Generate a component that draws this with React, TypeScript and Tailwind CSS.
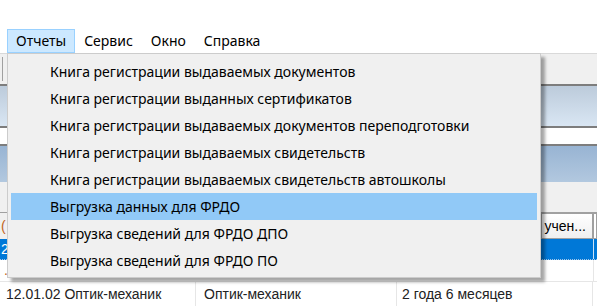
import { useState } from 'react'

const MENU_TOP = ['Отчеты', 'Сервис', 'Окно', 'Справка']

const REPORT_ITEMS = [
    'Книга регистрации выдаваемых документов',
    'Книга регистрации выданных сертификатов',
    'Книга регистрации выдаваемых документов переподготовки',
    'Книга регистрации выдаваемых свидетельств',
    'Книга регистрации выдаваемых свидетельств автошколы',
    'Выгрузка данных для ФРДО',
    'Выгрузка сведений для ФРДО ДПО',
    'Выгрузка сведений для ФРДО ПО',
]

export default function App() {
    const [hover, setHover] = useState(5)

    return (
        <div className="relative w-[597px] h-[306px] overflow-hidden bg-white font-['Noto_Sans',sans-serif] text-[14px] text-black">
            {/* Шапка и строка меню */}
            <div className="h-[29px] bg-white" />
            <div className="flex h-[24px] pl-[7px] bg-white">
                {MENU_TOP.map((item, i) => (
                    <div
                        key={item}
                        className={`flex items-center px-[8px] leading-none border ${
                            i === 0 ? 'bg-[#cce8ff] border-[#99d1ff]' : 'border-transparent'
                        }`}
                    >
                        {item}
                    </div>
                ))}
            </div>

            {/* Панель инструментов */}
            <div className="h-[31px] bg-[#f0f0f0] border-t border-[#d9d9d9] flex items-center pl-[2px]">
                <div className="w-[1px] h-[24px] bg-[#a0a0a0]" />
            </div>
            <div className="h-[2px] bg-[#7d7d7d]" />
            <div className="h-[40px] bg-gradient-to-b from-[#bccbdb] to-[#d9e6f3]" />
            <div className="h-[2px] bg-[#7d7d7d]" />
            <div className="h-[16px] bg-white" />
            <div className="h-[2px] bg-[#7d7d7d]" />
            <div className="h-[36px] bg-gradient-to-b from-[#98b4d3] to-[#b2c8df]" />
            <div className="h-[31px] bg-[#f0f0f0] border-b border-[#a0a0a0]" />

            {/* Таблица */}
            <div className="flex h-[26px] font-['Liberation_Sans',sans-serif] text-[14px] bg-[#f0f0f0]">
                <div className="w-[541px] flex items-center pl-[1px] text-[#c0641a] border-r border-[#a0a0a0]">(</div>
                <div className="w-[52px] flex items-center justify-end pr-[6px] bg-gradient-to-b from-[#ffffff] to-[#f0f0f0] border border-[#a0a0a0] leading-none">учен...</div>
                <div className="flex-1 border border-[#a0a0a0] bg-white" />
            </div>
            <div className="flex h-[21px] bg-[#0078d7] font-['Liberation_Sans',sans-serif] text-[14px] text-white border-b border-dotted border-[#9fc6ea]">
                <div className="w-[593px] flex items-center pl-[1px]">2</div>
                <div className="flex-1 border-l border-[#cfe3f5]" />
            </div>
            <div className="flex h-[22px] bg-white font-['Liberation_Sans',sans-serif] text-[14px] border-b border-[#e6e6e6]">
                <div className="w-[593px] flex items-center pl-[4px] text-[#c0641a]">.</div>
                <div className="flex-1 border-l border-[#e6e6e6]" />
            </div>
            <div className="flex h-[24px] bg-white font-['Liberation_Sans',sans-serif] text-[14px] text-[#222]">
                <div className="w-[196px] flex items-center pl-[6px] border-r border-[#e6e6e6]">12.01.02 Оптик-механик</div>
                <div className="w-[201px] flex items-center pl-[8px] border-r border-[#e6e6e6]">Оптик-механик</div>
                <div className="w-[196px] flex items-center pl-[5px] border-r border-[#e6e6e6]">2 года 6 месяцев</div>
                <div className="flex-1" />
            </div>

            {/* Выпадающее меню "Отчеты" */}
            <div className="absolute left-[7px] top-[53px] w-[534px] bg-[#f0f0f0] border border-[#cccccc] pt-[4px] pb-[3px] px-[3px] shadow-[4px_4px_3px_rgba(0,0,0,0.35)]">
                {REPORT_ITEMS.map((item, i) => (
                    <div
                        key={item}
                        onMouseEnter={() => setHover(i)}
                        className={`h-[27px] flex items-center pl-[39px] whitespace-nowrap ${
                            hover === i ? 'bg-[#91c9f7]' : ''
                        }`}
                    >
                        {item}
                    </div>
                ))}
            </div>
        </div>
    )
}
